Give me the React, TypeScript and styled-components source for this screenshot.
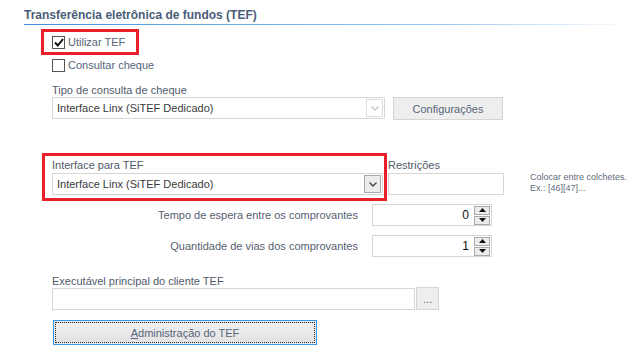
import React from 'react';
import styled, { createGlobalStyle } from 'styled-components';

const GlobalStyle = createGlobalStyle`
  body {
    margin: 0;
    background: #ffffff;
    font-family: "Liberation Sans", Arial, sans-serif;
    font-size: 11px;
    color: #4f5a6b;
  }
`;

const Page = styled.div`
  width: 631px;
  height: 353px;
  overflow: hidden;
  display: flex;
  flex-direction: column;
  align-items: flex-start;
`;

const Header = styled.div`
  align-self: stretch;
  margin-left: 24px;
  padding-top: 7px;
  padding-bottom: 1px;
  line-height: 16px;
  font-size: 12px;
  font-weight: bold;
  color: #4a5d78;
  border-bottom: 1px solid;
  border-image: linear-gradient(to right, #3d8fe0, #9cc8f2 70%, #ffffff) 1;
`;

const Highlight = styled.div<{ $left: number; $top: number; $pad: string }>`
  margin-left: ${p => p.$left}px;
  margin-top: ${p => p.$top}px;
  border: 3px solid #e8202a;
  padding: ${p => p.$pad};
  display: flex;
  flex-direction: column;
`;

const CheckRow = styled.label<{ $indent?: number; $top?: number }>`
  display: flex;
  align-items: center;
  gap: 3px;
  height: 14px;
  margin-left: ${p => p.$indent ?? 0}px;
  margin-top: ${p => p.$top ?? 0}px;
  color: #55657a;
`;

const Box = styled.span`
  width: 11px;
  height: 11px;
  border: 1px solid #555;
  background: #fff;
  display: flex;
  align-items: center;
  justify-content: center;
`;

const Label = styled.div<{ $indent?: number; $top?: number }>`
  line-height: 14px;
  margin-left: ${p => p.$indent ?? 0}px;
  margin-top: ${p => p.$top ?? 0}px;
  white-space: nowrap;
`;

const Row = styled.div<{ $indent?: number; $top?: number }>`
  display: flex;
  align-items: flex-start;
  margin-left: ${p => p.$indent ?? 0}px;
  margin-top: ${p => p.$top ?? 0}px;
`;

const Combo = styled.div<{ $width: number; $gap?: number }>`
  width: ${p => p.$width}px;
  height: 22px;
  box-sizing: border-box;
  border: 1px solid #d6d6d6;
  background: #fff;
  display: flex;
  align-items: center;
  margin-top: ${p => p.$gap ?? 0}px;
  color: #3a3a3a;
`;

const ComboText = styled.span`
  flex: 1;
  padding-left: 4px;
  white-space: nowrap;
`;

const ArrowBtn = styled.span<{ $enabled?: boolean }>`
  width: 17px;
  height: 18px;
  box-sizing: border-box;
  margin-right: 1px;
  border: 1px solid ${p => (p.$enabled ? '#a9a9a9' : '#dcdcdc')};
  background: ${p => (p.$enabled ? '#ececec' : '#ffffff')};
  display: flex;
  align-items: center;
  justify-content: center;
`;

const Button = styled.div<{ $width: number; $height: number; $left?: number }>`
  width: ${p => p.$width}px;
  height: ${p => p.$height}px;
  box-sizing: border-box;
  margin-left: ${p => p.$left ?? 0}px;
  border: 1px solid #d6d6d6;
  background: #eeeeee;
  display: flex;
  align-items: center;
  justify-content: center;
  color: #55657a;
`;

const TextBox = styled.div<{ $width: number; $gap?: number }>`
  width: ${p => p.$width}px;
  height: 22px;
  box-sizing: border-box;
  margin-top: ${p => p.$gap ?? 0}px;
  border: 1px solid #d6d6d6;
  background: #fff;
`;

const Column = styled.div<{ $left?: number; $top?: number }>`
  display: flex;
  flex-direction: column;
  margin-left: ${p => p.$left ?? 0}px;
  padding-top: ${p => p.$top ?? 0}px;
`;

const Note = styled.div`
  margin-left: 26px;
  margin-top: 19px;
  font-size: 9px;
  line-height: 11px;
  white-space: nowrap;
  color: #5f6c80;
`;

const SpinLabel = styled.div`
  width: 306px;
  text-align: right;
  line-height: 22px;
  margin-right: 14px;
  color: #55606f;
`;

const Spin = styled.div`
  width: 120px;
  height: 22px;
  box-sizing: border-box;
  border: 1px solid #d6d6d6;
  background: #fff;
  display: flex;
  align-items: center;
`;

const SpinValue = styled.span`
  flex: 1;
  text-align: right;
  padding-right: 5px;
  font-size: 12px;
  color: #111;
`;

const SpinButtons = styled.span`
  display: flex;
  flex-direction: column;
  gap: 1px;
  margin-right: 1px;
`;

const SpinBtn = styled.span`
  width: 16px;
  height: 9px;
  box-sizing: border-box;
  border: 1px solid #a9a9a9;
  background: #ececec;
  display: flex;
  align-items: center;
  justify-content: center;
`;

const AdminButton = styled.div`
  margin-left: 53px;
  margin-top: 10px;
  width: 264px;
  height: 25px;
  box-sizing: border-box;
  border: 1px solid #3a97e8;
  padding: 1px;
  background: #ebebeb;
  display: flex;
`;

const Focus = styled.div`
  flex: 1;
  border: 1px dotted #222;
  background: linear-gradient(#efefef, #e3e3e3);
  display: flex;
  align-items: center;
  justify-content: center;
  color: #55657a;
  u { text-decoration: underline; }
`;

const Chevron = ({ color }: { color: string }) => (
  <svg width="8" height="5" viewBox="0 0 8 5">
    <polyline points="0.5,0.5 4,4 7.5,0.5" fill="none" stroke={color} strokeWidth="1.4" />
  </svg>
);

const Tri = ({ up }: { up?: boolean }) => (
  <svg width="7" height="4" viewBox="0 0 7 4">
    <polygon points={up ? '0,4 7,4 3.5,0' : '0,0 7,0 3.5,4'} fill="#111" />
  </svg>
);

const Check = () => (
  <svg width="10" height="9" viewBox="0 0 10 9">
    <polyline points="1,4.5 3.8,7.5 9,1" fill="none" stroke="#111" strokeWidth="2" />
  </svg>
);

const SpinField = ({ label, value, top }: { label: string; value: string; top: number }) => (
  <Row $indent={52} $top={top}>
    <SpinLabel>{label}</SpinLabel>
    <Spin>
      <SpinValue>{value}</SpinValue>
      <SpinButtons>
        <SpinBtn><Tri up /></SpinBtn>
        <SpinBtn><Tri /></SpinBtn>
      </SpinButtons>
    </Spin>
  </Row>
);

export default function App() {
  return (
    <Page>
      <GlobalStyle />
      <Header>Transferência eletrônica de fundos (TEF)</Header>

      <Highlight $left={41} $top={4} $pad="3px 11px 3px 8px">
        <CheckRow>
          <Box><Check /></Box>
          Utilizar TEF
        </CheckRow>
      </Highlight>
      <CheckRow $indent={52} $top={3}>
        <Box />
        Consultar cheque
      </CheckRow>

      <Label $indent={52} $top={11}>Tipo de consulta de cheque</Label>
      <Row $indent={52}>
        <Combo $width={333}>
          <ComboText>Interface Linx (SiTEF Dedicado)</ComboText>
          <ArrowBtn><Chevron color="#c4c4c4" /></ArrowBtn>
        </Combo>
        <Button $width={110} $height={23} $left={8}>Configurações</Button>
      </Row>

      <Row $top={33}>
        <Highlight $left={42} $top={0} $pad="2px 1px 3px 7px">
          <Label>Interface para TEF</Label>
          <Combo $width={331} $gap={1}>
            <ComboText>Interface Linx (SiTEF Dedicado)</ComboText>
            <ArrowBtn $enabled><Chevron color="#444" /></ArrowBtn>
          </Combo>
        </Highlight>
        <Column $left={1} $top={5}>
          <Label>Restrições</Label>
          <TextBox $width={116} $gap={1} />
        </Column>
        <Note>
          Colocar entre colchetes.
          <br />
          Ex.: [46][47]...
        </Note>
      </Row>

      <SpinField label="Tempo de espera entre os comprovantes" value="0" top={3} />
      <SpinField label="Quantidade de vias dos comprovantes" value="1" top={9} />

      <Label $indent={52} $top={17}>Executável principal do cliente TEF</Label>
      <Row $indent={52}>
        <TextBox $width={363} />
        <Button $width={23} $height={23} $left={1} style={{ marginTop: -1 }}>...</Button>
      </Row>

      <AdminButton>
        <Focus><span><u>A</u>dministração do TEF</span></Focus>
      </AdminButton>
    </Page>
  );
}
